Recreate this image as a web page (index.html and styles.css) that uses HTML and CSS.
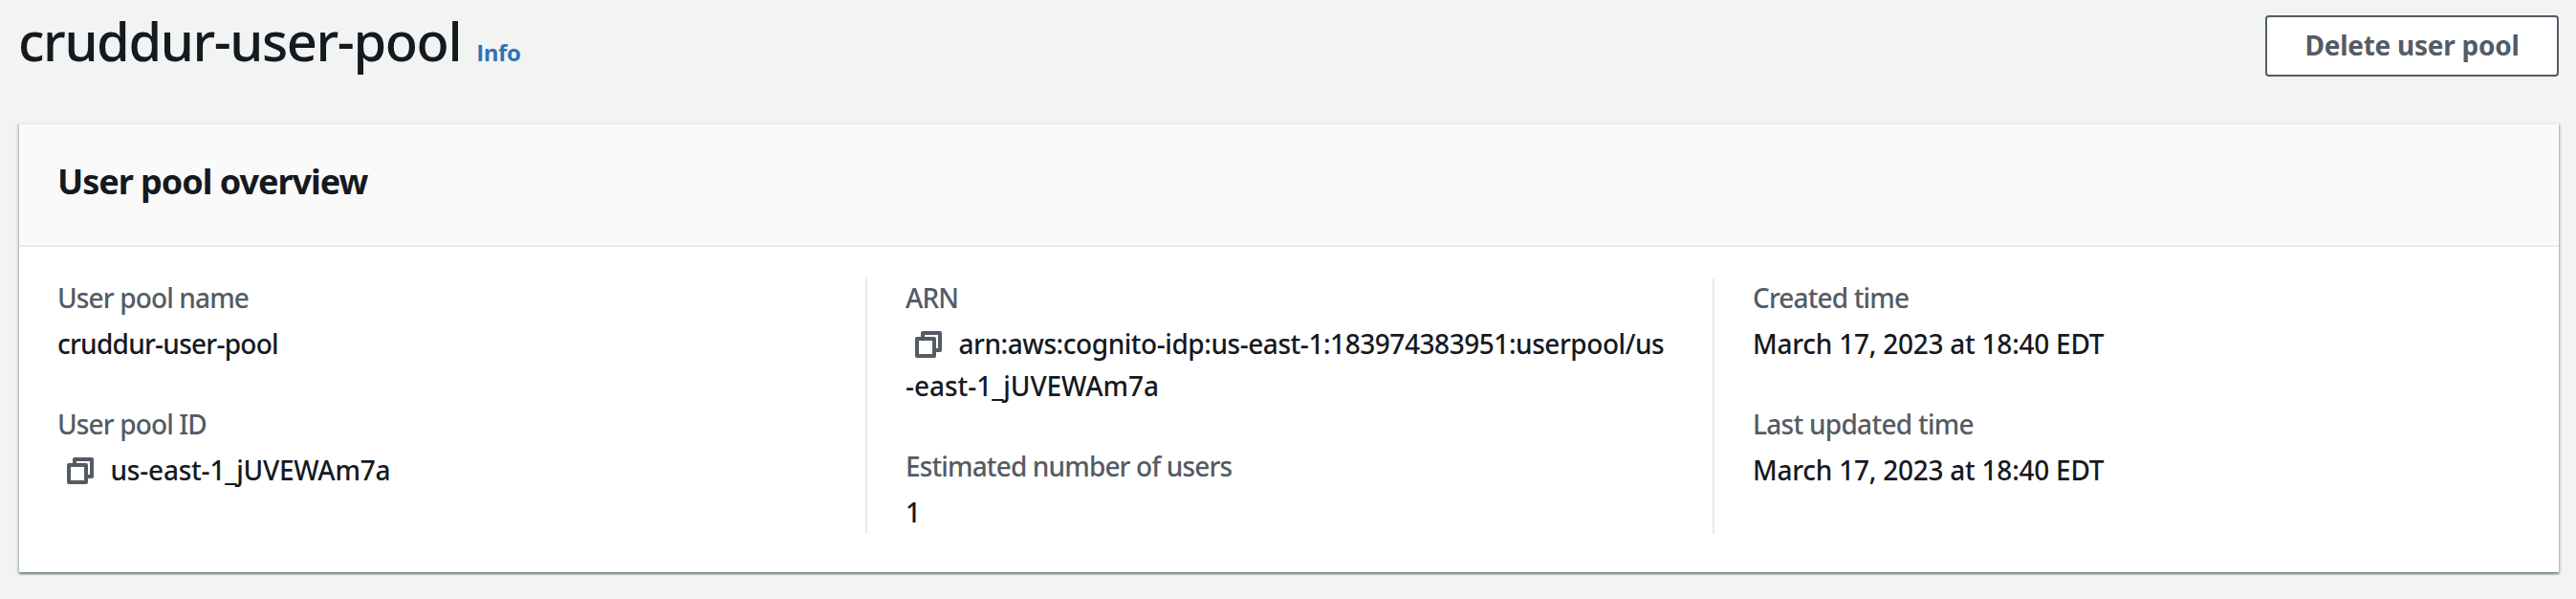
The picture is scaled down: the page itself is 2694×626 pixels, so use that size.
FILE: index.html
```html
<!DOCTYPE html>
<html lang="en">
<head>
<meta charset="utf-8">
<title>cruddur-user-pool</title>
<link rel="stylesheet" href="styles.css">
</head>
<body>
<header class="page-header">
  <div class="heading"><h1 class="title">cruddur-user-pool</h1><a class="info">Info</a></div>
  <button class="button" type="button">Delete user pool</button>
</header>
<section class="card">
  <div class="card-header"><h2 class="card-title">User pool overview</h2></div>
  <div class="columns">
    <dl class="column">
      <div class="field"><dt class="label">User pool name</dt><dd class="value name">cruddur-user-pool</dd></div>
      <div class="field"><dt class="label">User pool ID</dt><dd class="value id"><svg class="copy" viewBox="0 0 28 28"><path d="M8 8V2h18v18h-6M2 8h18v18H2z"/></svg>us-east-1_jUVEWAm7a</dd></div>
    </dl>
    <dl class="column">
      <div class="field"><dt class="label">ARN</dt><dd class="value"><svg class="copy" viewBox="0 0 28 28"><path d="M8 8V2h18v18h-6M2 8h18v18H2z"/></svg><span class="arn">arn:aws:cognito-idp:us-east-1:183974383951:userpool/us</span><br><span class="arn-rest">-east-1_jUVEWAm7a</span></dd></div>
      <div class="field"><dt class="label">Estimated number of users</dt><dd class="value">1</dd></div>
    </dl>
    <dl class="column">
      <div class="field"><dt class="label">Created time</dt><dd class="value date">March 17, 2023 at 18:40 EDT</dd></div>
      <div class="field"><dt class="label updated">Last updated time</dt><dd class="value date">March 17, 2023 at 18:40 EDT</dd></div>
    </dl>
  </div>
</section>
</body>
</html>
```
FILE: styles.css
```css
* { box-sizing: border-box; }
body {
  margin: 0;
  height: 626px;
  overflow: hidden;
  background: #f2f4f3;
  color: #16191f;
  font: 500 28px/44px "Noto Sans", sans-serif;
}
h1, h2, dl, dd { margin: 0; }
.page-header {
  display: flex;
  justify-content: space-between;
  height: 128px;
  padding: 6px 18px 0 19px;
}
.heading { display: flex; align-items: baseline; height: 72px; }
.title { font-size: 56px; font-weight: 500; line-height: 72px; letter-spacing: -1.4px; }
.info {
  margin-left: 16px;
  color: #2f72b9;
  font: 700 24px/40px "Open Sans", sans-serif;
  letter-spacing: -0.4px;
}
.button {
  width: 307px;
  height: 64px;
  margin-top: 10px;
  padding: 0 0 2px;
  border: 2px solid #545b64;
  border-radius: 4px;
  background: #fff;
  color: #545b64;
  font: 700 28px/40px "Noto Sans", sans-serif;
  letter-spacing: -0.26px;
}
.card {
  width: 2656px;
  height: 470px;
  margin-left: 20px;
  border-top: 2px solid #eaebeb;
  background: #fff;
  box-shadow: 0 2px 2px rgba(0, 28, 36, .35), 2px 2px 2px rgba(0, 28, 36, .15), -2px 2px 2px rgba(0, 28, 36, .15);
}
.card-header {
  height: 128px;
  padding: 38px 40px;
  border-bottom: 2px solid #eaebeb;
  background: #fafafa;
}
.card-title { font-size: 36px; font-weight: 700; line-height: 44px; letter-spacing: -1.03px; }
.columns {
  display: grid;
  grid-template-columns: 885px 886px 885px;
  height: 268px;
  margin-top: 32px;
}
.column { padding-left: 40px; }
.column + .column { border-left: 2px solid #eaebeb; }
.field { margin-top: -1px; }
.field + .field { margin-top: 40px; }
.label { color: #545b64; letter-spacing: -0.86px; }
.updated { letter-spacing: -0.72px; }
.value { margin-top: 4px; white-space: nowrap; }
.name { letter-spacing: -0.74px; }
.id { letter-spacing: -0.21px; }
.arn { letter-spacing: -0.45px; }
.arn-rest { letter-spacing: -0.04px; }
.date { letter-spacing: -0.24px; }
.copy {
  width: 28px;
  height: 28px;
  margin: 0 17.5px 0 10px;
  vertical-align: -4px;
  fill: none;
  stroke: #545b64;
  stroke-width: 4;
  stroke-linejoin: round;
}
```
